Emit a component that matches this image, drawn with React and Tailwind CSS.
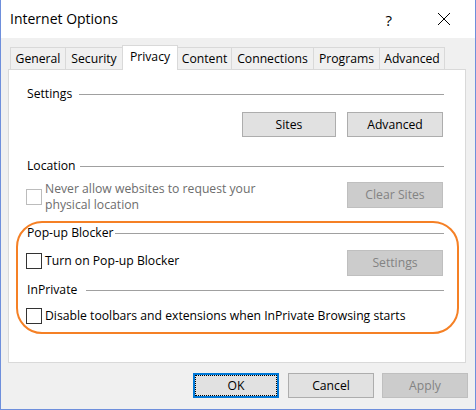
import React from 'react'

const tabs = [
    { label: 'General', w: 'w-[56px]' },
    { label: 'Security', w: 'w-[58px]' },
    { label: 'Privacy', w: 'w-[56px]', active: true },
    { label: 'Content', w: 'w-[55px]' },
    { label: 'Connections', w: 'w-[83px]' },
    { label: 'Programs', w: 'w-[67px]' },
    { label: 'Advanced', w: 'w-[66px]' },
]

function GroupTitle({ children, w }) {
    return (
        <div className="flex items-center h-[16px]">
            <span className={`shrink-0 ${w}`}>{children}</span>
            <div className="flex-1 h-px bg-[#a0a0a0] mr-[-1px]" />
        </div>
    )
}

function Checkbox({ disabled }) {
    return (
        <span
            className={`block shrink-0 w-[16px] h-[16px] -ml-px bg-white border ${disabled ? 'border-[#bcbcbc]' : 'border-[#333333]'}`}
        />
    )
}

function Button({ children, w, disabled, focused }) {
    // disabled buttons are flatter and greyer
    const look = disabled
        ? 'bg-[#cccccc] border border-[#bfbfbf] text-[#838383]'
        : focused
            ? 'bg-[#e1e1e1] border-2 border-[#0078d7]'
            : 'bg-[#e1e1e1] border border-[#adadad]'
    return (
        <div className={`relative shrink-0 flex items-center justify-center ${w} ${look}`}>
            {focused && <span className="absolute inset-0 border border-dotted border-black" />}
            <span>{children}</span>
        </div>
    )
}

export default function App() {
    return (
        <div className="relative w-[476px] h-[410px] flex flex-col bg-[#f0f0f0] border-x border-b border-[#6e8fdc] font-['Open_Sans',sans-serif] text-[12.2px] leading-[16px] text-black overflow-hidden">
            {/* Title bar */}
            <div className="h-[38px] shrink-0 bg-white flex items-center pl-[9px]">
                <span className="text-[14px] leading-[20px]">Internet Options</span>
                <span className="ml-auto text-[15px] leading-[20px] mt-[1px]">?</span>
                <svg className="ml-[45px] mr-[24px]" width="14" height="14" viewBox="0 0 14 14">
                    <path d="M1 1 L13 13 M13 1 L1 13" stroke="#000" strokeWidth="1" fill="none" />
                </svg>
            </div>

            {/* Tabs */}
            <div className="flex items-end h-[24px] mt-[7px] pl-[9px] shrink-0">
                {tabs.map((t, i) =>
                    t.active ? (
                        <div
                            key={t.label}
                            className={`relative z-10 -ml-px h-[25px] -mb-px ${t.w} bg-white border border-b-0 border-[#d9d9d9] flex items-center justify-center pb-[2px]`}
                        >
                            {t.label}
                        </div>
                    ) : (
                        <div
                            key={t.label}
                            className={`${i === 0 ? '' : '-ml-px'} h-[22px] ${t.w} bg-[#f0f0f0] border border-b-0 border-[#d9d9d9] flex items-center justify-center`}
                        >
                            {t.label}
                        </div>
                    )
                )}
            </div>

            {/* Privacy panel */}
            <div className="ml-[7px] w-[458px] h-[294px] shrink-0 bg-white border border-[#d9d9d9] pt-[16px] pl-[18px] pr-[22px]">
                <GroupTitle w="w-[52px]">Settings</GroupTitle>
                <div className="mt-[10px] flex justify-end gap-[11px] h-[25px]">
                    <Button w="w-[94px]">Sites</Button>
                    <Button w="w-[96px]">Advanced</Button>
                </div>

                <div className="mt-[21px]">
                    <GroupTitle w="w-[53px]">Location</GroupTitle>
                </div>
                <div className="mt-[7px] flex items-center justify-between">
                    <div className="flex items-center">
                        <Checkbox disabled />
                        <span className="ml-[3px] w-[240px] text-[#6d6d6d]">
                            Never allow websites to request your physical location
                        </span>
                    </div>
                    <div className="h-[26px] flex mb-[4px]">
                        <Button w="w-[96px]" disabled>Clear Sites</Button>
                    </div>
                </div>

                <div className="mt-[12px]">
                    <GroupTitle w="w-[88px]">Pop-up Blocker</GroupTitle>
                </div>
                <div className="mt-[9px] h-[26px] flex items-start justify-between">
                    <div className="mt-[3px] flex items-center">
                        <Checkbox />
                        <span className="ml-[3px]">Turn on Pop-up Blocker</span>
                    </div>
                    <div className="h-[26px] flex">
                        <Button w="w-[96px]" disabled>Settings</Button>
                    </div>
                </div>

                <div className="mt-[6px]">
                    <GroupTitle w="w-[59px]">InPrivate</GroupTitle>
                </div>
                <div className="mt-[10px] flex items-center">
                    <Checkbox />
                    <span className="ml-[3px]">Disable toolbars and extensions when InPrivate Browsing starts</span>
                </div>
            </div>

            {/* Dialog buttons */}
            <div className="mt-[10px] h-[25px] flex justify-end pr-[7px]">
                <Button w="w-[86px]" focused>OK</Button>
                <div className="ml-[9px] flex">
                    <Button w="w-[86px]">Cancel</Button>
                </div>
                <div className="ml-[8px] flex">
                    <Button w="w-[86px]" disabled>Apply</Button>
                </div>
            </div>

            {/* orange highlight */}
            <div className="pointer-events-none absolute left-[15px] top-[221px] w-[443px] h-[113px] rounded-[26px] border-2 border-[#f58025]" />
        </div>
    )
}
